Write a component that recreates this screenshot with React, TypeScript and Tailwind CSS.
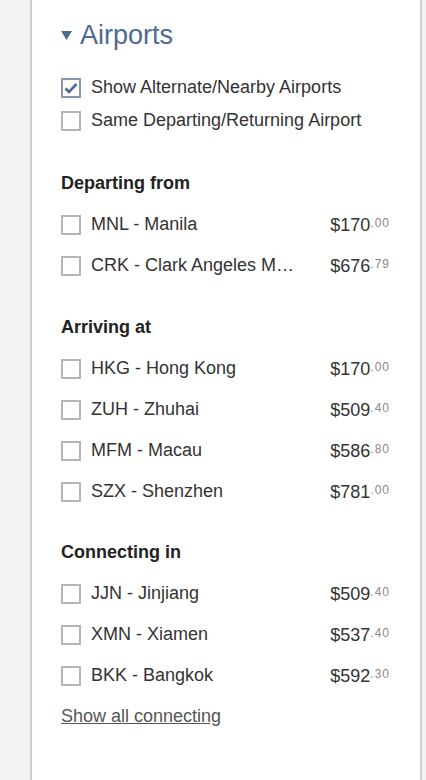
import React from 'react';

type Airport = { label: string; dollars: string; cents: string };

const departing: Airport[] = [
  { label: 'MNL - Manila', dollars: '$170', cents: '.00' },
  { label: 'CRK - Clark Angeles M…', dollars: '$676', cents: '.79' },
];

const arriving: Airport[] = [
  { label: 'HKG - Hong Kong', dollars: '$170', cents: '.00' },
  { label: 'ZUH - Zhuhai', dollars: '$509', cents: '.40' },
  { label: 'MFM - Macau', dollars: '$586', cents: '.80' },
  { label: 'SZX - Shenzhen', dollars: '$781', cents: '.00' },
];

const connecting: Airport[] = [
  { label: 'JJN - Jinjiang', dollars: '$509', cents: '.40' },
  { label: 'XMN - Xiamen', dollars: '$537', cents: '.40' },
  { label: 'BKK - Bangkok', dollars: '$592', cents: '.30' },
];

const Box = ({ checked = false }: { checked?: boolean }) => (
  <span
    className={`flex-none w-5 h-5 flex items-center justify-center border-2 bg-white ${
      checked ? 'border-[#8a99b3]' : 'border-[#b5b5b5]'
    }`}
  >
    {checked && (
      <svg width="14" height="12" viewBox="0 0 14 12">
        <path d="M1.5 6.5 L5 10 L12.5 2" fill="none" stroke="#4e6a94" strokeWidth="2.6" />
      </svg>
    )}
  </span>
);

const AirportRow = ({ a }: { a: Airport }) => (
  <label className="flex items-center h-[41px] cursor-pointer">
    <Box />
    <span className="ml-[10px] flex-1 min-w-0 truncate mr-[30px] text-[18px] text-[#333]">{a.label}</span>
    <span className="flex-none flex items-start text-[18px] text-[#333] leading-none">
      {a.dollars}
      <span className="text-[12px] tracking-[1px] text-[#888] mt-[1px]">{a.cents}</span>
    </span>
  </label>
);

const Section = ({ title, items }: { title: string; items: Airport[] }) => (
  <div>
    <div className="h-[41px] flex items-center text-[18px] font-bold text-[#222]">{title}</div>
    {items.map((a) => (
      <AirportRow key={a.label} a={a} />
    ))}
  </div>
);

export default function App() {
  return (
    <div
      className="min-h-[780px] w-[426px] bg-[#f2f2f2] flex"
      style={{ fontFamily: '"Liberation Sans", Arial, sans-serif' }}
    >
      <div className="ml-[30px] w-[392px] min-h-[780px] bg-white border-x-2 border-[#cfcfcf] pl-[29px] pr-[30px] pt-[15px]">
        <button className="h-10 flex items-center gap-[8px] text-[#4f6a90]">
          <svg width="11" height="9" viewBox="0 0 11 9" className="mt-[1px]">
            <path d="M0 0 H11 L5.5 9 Z" fill="#4f6a90" />
          </svg>
          <span className="text-[27px]">Airports</span>
        </button>

        <div className="mt-[16px]">
          <label className="flex items-center h-[33px] gap-[10px] text-[18px] text-[#333]">
            <Box checked />
            Show Alternate/Nearby Airports
          </label>
          <label className="flex items-center h-[33px] gap-[10px] text-[18px] text-[#333]">
            <Box />
            Same Departing/Returning Airport
          </label>
        </div>

        <div className="mt-[26px]">
          <Section title="Departing from" items={departing} />
        </div>
        <div className="mt-[21px]">
          <Section title="Arriving at" items={arriving} />
        </div>
        <div className="mt-[20px]">
          <Section title="Connecting in" items={connecting} />
        </div>

        <a href="#" className="block mt-[8px] text-[18px] text-[#555] underline leading-[24px]">
          Show all connecting
        </a>
      </div>
    </div>
  );
}
